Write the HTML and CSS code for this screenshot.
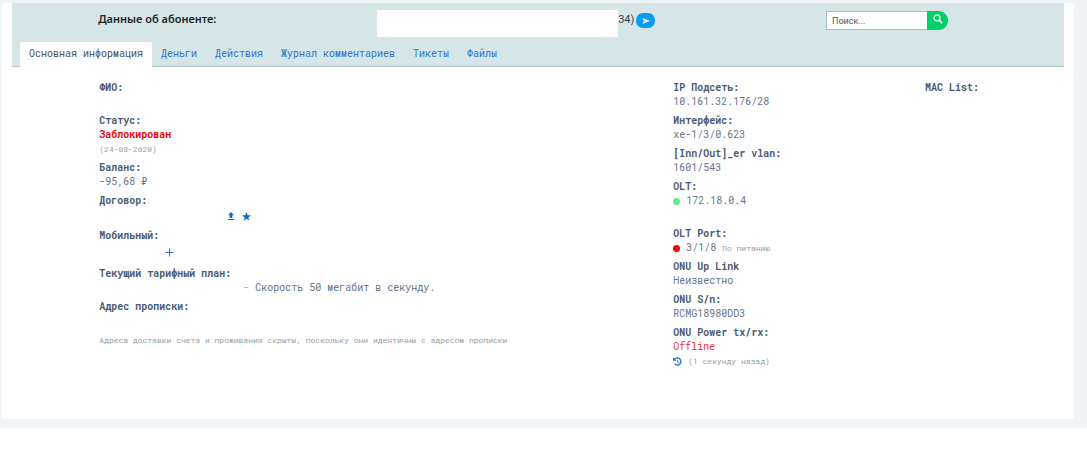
FILE: index.html
```html
<!DOCTYPE html>
<html lang="ru">
<head>
  <meta charset="UTF-8">
  <meta name="viewport" content="width=device-width, initial-scale=1.0">
  <title>Данные об абоненте</title>
  <link rel="stylesheet" href="styles.css">
</head>
<body>

  <div class="page">
    <main class="card">
      <header class="head">
        <div class="head-row">
          <h1 class="title">Данные об абоненте:</h1>
          <div class="account">
            <span class="account-name"></span>
            <span>34)</span>
            <button type="button" class="btn-send" aria-label="Перейти">
              <svg viewBox="0 0 8 8" width="8" height="8"><path d="M0.5 1 L7.8 4 L0.5 7 L1.6 4.5 L4.5 4 L1.6 3.5 Z" fill="#fff"/></svg>
            </button>
          </div>
          <form class="search">
            <input type="text" class="search-input" placeholder="Поиск..." aria-label="Поиск">
            <button type="submit" class="btn-search" aria-label="Найти">
              <svg viewBox="0 0 10 10" width="10" height="10"><circle cx="4" cy="4" r="3" fill="none" stroke="#fff" stroke-width="1.3"/><path d="M6.3 6.3 L9.2 9.2" stroke="#fff" stroke-width="1.5"/></svg>
            </button>
          </form>
        </div>
        <nav class="tabs">
          <a href="#info" class="tab active">Основная информация</a>
          <a href="#money" class="tab">Деньги</a>
          <a href="#actions" class="tab">Действия</a>
          <a href="#comments" class="tab">Журнал комментариев</a>
          <a href="#tickets" class="tab">Тикеты</a>
          <a href="#files" class="tab">Файлы</a>
        </nav>
      </header>

      <div class="content" id="info">
        <dl class="col">
          <div>
            <dt>ФИО:</dt>
            <dd></dd>
          </div>
          <div>
            <dt>Статус:</dt>
            <dd class="blocked">Заблокирован</dd>
            <dd class="small">(24-08-2020)</dd>
          </div>
          <div>
            <dt>Баланс:</dt>
            <dd>-95,68 ₽</dd>
          </div>
          <div>
            <dt>Договор:</dt>
            <dd class="contract">
              <a href="#upload" aria-label="Загрузить договор">
                <svg viewBox="0 0 8 8" width="8" height="8"><path d="M4 0 L7 3.2 H5.3 V6 H2.7 V3.2 H1 Z M1 7 H7 V8 H1 Z" fill="#1268c8"/></svg>
              </a>
              <a href="#favorite" aria-label="В избранное">
                <svg viewBox="0 0 10 10" width="9" height="9"><path d="M5 0 L6.3 3.5 L10 3.7 L7.1 6 L8.1 9.7 L5 7.6 L1.9 9.7 L2.9 6 L0 3.7 L3.7 3.5 Z" fill="#1268c8"/></svg>
              </a>
            </dd>
          </div>
          <div>
            <dt>Мобильный:</dt>
            <dd class="mobile">
              <a href="#add-phone" aria-label="Добавить номер">
                <svg viewBox="0 0 9 9" width="9" height="9"><path d="M4 0.5 H5 V4 H8.5 V5 H5 V8.5 H4 V5 H0.5 V4 H4 Z" fill="#2f70c4"/></svg>
              </a>
            </dd>
          </div>
          <div>
            <dt>Текущий тарифный план:</dt>
            <dd class="tariff"><span class="dash">-</span> Скорость 50 мегабит в секунду.</dd>
          </div>
          <div>
            <dt>Адрес прописки:</dt>
            <dd></dd>
          </div>
          <div>
            <dd class="small">Адреса доставки счета и проживания скрыты, поскольку они идентичны с адресом прописки</dd>
          </div>
        </dl>

        <dl class="col">
          <div>
            <dt>IP Подсеть:</dt>
            <dd>10.161.32.176/28</dd>
          </div>
          <div>
            <dt>Интерфейс:</dt>
            <dd>xe-1/3/0.623</dd>
          </div>
          <div>
            <dt>[Inn/Out]_er vlan:</dt>
            <dd>1601/543</dd>
          </div>
          <div>
            <dt>OLT:</dt>
            <dd class="line"><span class="dot dot-green"></span>172.18.0.4</dd>
            <dd></dd>
          </div>
          <div>
            <dt>OLT Port:</dt>
            <dd class="line"><span class="dot dot-red"></span>3/1/8 <span class="small">По питанию</span></dd>
          </div>
          <div>
            <dt>ONU Up Link</dt>
            <dd>Неизвестно</dd>
          </div>
          <div>
            <dt>ONU S/n:</dt>
            <dd>RCMG18980DD3</dd>
          </div>
          <div>
            <dt>ONU Power tx/rx:</dt>
            <dd class="offline">Offline</dd>
            <dd class="line small">
              <a href="#refresh" aria-label="Обновить">
                <svg viewBox="0 0 10 10" width="9" height="9"><path d="M1.6 2.6 A4 4 0 1 1 1.8 7.6" fill="none" stroke="#1f6fd0" stroke-width="1.5"/><path d="M0 0.2 V4.2 H4 Z" fill="#1f6fd0"/><path d="M5 2.8 V5.3 L6.8 6.2" fill="none" stroke="#1f6fd0" stroke-width="1"/></svg>
              </a>
              <span>(1 секунду назад)</span>
            </dd>
          </div>
        </dl>

        <dl class="col">
          <div>
            <dt>MAC List:</dt>
            <dd></dd>
          </div>
        </dl>
      </div>
    </main>
  </div>

</body>
</html>
```
FILE: styles.css
```css
* {
  box-sizing: border-box;
}

body {
  margin: 0;
  background: #fff;
  color: #66758a;
  font-family: "Roboto Mono", "Liberation Mono", monospace;
  font-size: 10px;
  line-height: 14px;
}

a {
  color: #3474cb;
  text-decoration: none;
}

svg {
  display: block;
}

.page {
  background: #eff5f7;
  padding: 3px 13px 9px 2px;
}

.card {
  background: #fff;
  border-radius: 3px;
  padding: 0 10px 51px;
}

/* header */
.head {
  background: #d6e5e7;
  border-bottom: 1px solid #afc4c9;
}

.head-row {
  display: grid;
  grid-template-columns: 279fr 449fr 238fr;
  padding: 7px 0 5px 8.2%;
  font-family: Roboto, sans-serif;
  font-size: 11px;
}

.title {
  margin: 2px 0 0;
  color: #212529;
  font-family: "Noto Sans", sans-serif;
  font-size: 11px;
  font-weight: 600;
  line-height: 14px;
}

.account {
  display: flex;
  align-items: flex-start;
  line-height: 20px;
  color: #3c454d;
}

.account-name {
  width: 241px;
  height: 27px;
  background: #fff;
}

.btn-send {
  display: flex;
  align-items: center;
  justify-content: center;
  width: 19px;
  height: 15px;
  margin: 3px 0 0 2px;
  padding: 0;
  border: none;
  border-radius: 7px;
  background: #0a9bf5;
  cursor: pointer;
}

.search {
  display: flex;
  height: 19px;
  margin-top: 1px;
}

.search-input {
  width: 101px;
  padding: 0 5px;
  border: 1px solid #a9bfc3;
  border-right: none;
  border-radius: 1px 0 0 1px;
  background: #fff;
  font-family: Roboto, sans-serif;
  font-size: 9px;
}

.search-input::placeholder {
  color: #4c565f;
}

.btn-search {
  display: flex;
  justify-content: center;
  width: 21px;
  padding: 3px 0 0;
  border: none;
  border-radius: 0 9px 9px 0;
  background: #00d068;
  cursor: pointer;
}

/* tabs */
.tabs {
  display: flex;
  padding-left: 8px;
  margin-bottom: -1px;
}

.tab {
  padding: 5px 9px 6px;
  border-radius: 2px 2px 0 0;
}

.tab.active {
  background: #fff;
  color: #495057;
}

/* content */
.content {
  display: grid;
  grid-template-columns: 574fr 252fr 139fr;
  padding: 14px 0 0 8.3%;
}

.col {
  display: flex;
  flex-direction: column;
  gap: 5px;
  margin: 0;
}

dt {
  color: #4c5c72;
  font-weight: 700;
}

dd {
  margin: 0;
  min-height: 14px;
}

.small {
  color: #90a0a8;
  font-size: 8px;
}

.blocked {
  color: #f00505;
  font-weight: 700;
}

.offline {
  color: #f0323a;
}

.contract {
  display: flex;
  align-items: center;
  gap: 7px;
  height: 16px;
  padding-left: 128px;
}

.mobile {
  display: flex;
  align-items: center;
  height: 19px;
  padding-left: 66px;
}

.tariff {
  padding-left: 144px;
}

.dash {
  color: #a3adb8;
}

.line {
  display: flex;
  align-items: center;
  gap: 6px;
}

.dot {
  width: 7px;
  height: 7px;
  border-radius: 50%;
}

.dot-green {
  background: #5fee8f;
}

.dot-red {
  background: #f50505;
}
```
